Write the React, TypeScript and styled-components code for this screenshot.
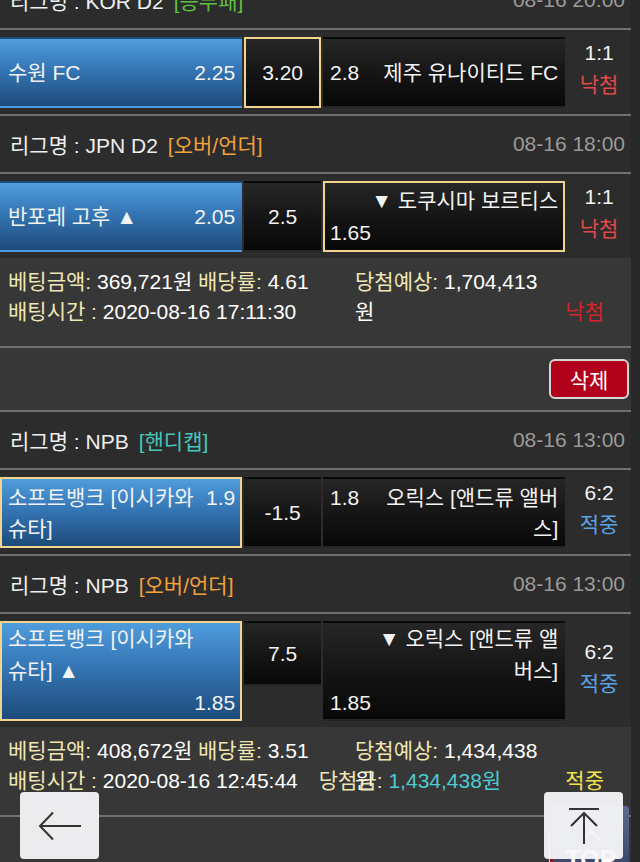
import React from "react";
import styled, { createGlobalStyle } from "styled-components";

type Tone = "green" | "orange" | "teal";
type Result = "낙첨" | "적중";

interface Side {
  name: string
  odds: string
  selected?: boolean
  stacked?: boolean
}

interface Game {
  league: string
  kind: string
  tone: Tone
  time: string
  home: Side
  line: string
  lineSelected?: boolean
  lineShort?: boolean
  away: Side
  score: string
  result: Result
}

interface Bet {
  games: Game[]
  amount: string
  rate: string
  expected: string
  betTime: string
  win?: string
  status: Result
}

const toneColors: Record<Tone, string> = {
  green: "#5fbf3f",
  orange: "#f0a23a",
  teal: "#45c6bd",
};

const bets: Bet[] = [
  {
    games: [
      {
        league: "KOR D2",
        kind: "승무패",
        tone: "green",
        time: "08-16 20:00",
        home: { name: "수원 FC", odds: "2.25" },
        line: "3.20",
        lineSelected: true,
        away: { name: "제주 유나이티드 FC", odds: "2.8" },
        score: "1:1",
        result: "낙첨",
      },
      {
        league: "JPN D2",
        kind: "오버/언더",
        tone: "orange",
        time: "08-16 18:00",
        home: { name: "반포레 고후 ▲", odds: "2.05" },
        line: "2.5",
        away: { name: "▼ 도쿠시마 보르티스", odds: "1.65", selected: true, stacked: true },
        score: "1:1",
        result: "낙첨",
      },
    ],
    amount: "369,721원",
    rate: "4.61",
    expected: "1,704,413원",
    betTime: "2020-08-16 17:11:30",
    status: "낙첨",
  },
  {
    games: [
      {
        league: "NPB",
        kind: "핸디캡",
        tone: "teal",
        time: "08-16 13:00",
        home: { name: "소프트뱅크 [이시카와 슈타]", odds: "1.9", selected: true },
        line: "-1.5",
        away: { name: "오릭스 [앤드류 앨버스]", odds: "1.8" },
        score: "6:2",
        result: "적중",
      },
      {
        league: "NPB",
        kind: "오버/언더",
        tone: "orange",
        time: "08-16 13:00",
        home: { name: "소프트뱅크 [이시카와 슈타] ▲", odds: "1.85", selected: true, stacked: true },
        line: "7.5",
        lineShort: true,
        away: { name: "▼ 오릭스 [앤드류 앨버스]", odds: "1.85", stacked: true },
        score: "6:2",
        result: "적중",
      },
    ],
    amount: "408,672원",
    rate: "3.51",
    expected: "1,434,438원",
    betTime: "2020-08-16 12:45:44",
    win: "1,434,438원",
    status: "적중",
  },
];

const GlobalStyle = createGlobalStyle`
  html, body {
    margin: 0;
    padding: 0;
    background: #272727;
  }

  body {
    font-family: "Liberation Sans", "Noto Sans CJK KR", sans-serif;
    font-size: 21px;
    color: #f2f2f2;
    overflow: hidden;
  }
`

const Page = styled.div`
  position: relative;
  width: 631px;
  height: 862px;
  overflow: hidden;
  background: #2c2c2c;
`

// the list is scrolled a little, so the first league header is cut at the top
const List = styled.div`
  margin-top: -30px;
`

const LeagueHeader = styled.div`
  display: flex;
  align-items: center;
  justify-content: space-between;
  height: 56px;
  padding: 0 6px 0 10px;
  border-top: 2px solid #6f6f6f;
  border-bottom: 2px solid #6f6f6f;
  background: #2c2c2c;
  white-space: nowrap;
`

const LeagueName = styled.div`
  color: #efefef;
`

const Kind = styled.span<{ $tone: Tone }>`
  margin-left: 10px;
  color: ${(p) => toneColors[p.$tone]};
`

const GameTime = styled.div`
  color: #9a9a9a;
`

const MatchRow = styled.div`
  display: flex;
  align-items: stretch;
  gap: 2px;
  padding: 7px 0 6px;
  background: #2c2c2c;
`

const Cell = styled.div<{ $selected?: boolean }>`
  box-sizing: border-box;
  min-height: 68px;
  border: 2px solid ${(p) => (p.$selected ? "#f2d58c" : "transparent")};
  background: linear-gradient(to bottom, #262626 0%, #141414 55%, #080808 100%);
  line-height: 31px;
`

const TeamCell = styled(Cell)<{ $home?: boolean; $stacked?: boolean }>`
  width: 243px;
  display: flex;
  flex-direction: column;
  justify-content: center;
  padding: ${(p) => (p.$stacked ? "0" : "2px")} 5px ${(p) => (p.$stacked ? "0" : "2px")}
    ${(p) => (p.$home ? "6px" : "5px")};
  line-height: ${(p) => (p.$stacked ? "32px" : "31px")};
  background: ${(p) =>
    p.$home
      ? "linear-gradient(to bottom, #4f9cdd 0%, #3576b5 45%, #1d4b7b 100%)"
      : "linear-gradient(to bottom, #262626 0%, #141414 55%, #080808 100%)"};
`

const TeamLine = styled.div`
  display: flex;
  align-items: flex-start;
  gap: 6px;
`

const TeamName = styled.div<{ $right?: boolean }>`
  flex: 1;
  text-align: ${(p) => (p.$right ? "right" : "left")};
`

const StackedName = styled.div<{ $right?: boolean }>`
  max-width: 190px;
  align-self: ${(p) => (p.$right ? "flex-end" : "flex-start")};
  text-align: ${(p) => (p.$right ? "right" : "left")};
`

const Odds = styled.div<{ $right?: boolean }>`
  flex-shrink: 0;
  text-align: ${(p) => (p.$right ? "right" : "left")};
`

const LineCell = styled(Cell)<{ $short?: boolean }>`
  width: 77px;
  display: flex;
  align-items: center;
  justify-content: center;
  align-self: ${(p) => (p.$short ? "flex-start" : "stretch")};
  height: ${(p) => (p.$short ? "65px" : "auto")};
  min-height: ${(p) => (p.$short ? "65px" : "68px")};
`

const ScoreCell = styled.div`
  width: 64px;
  display: flex;
  flex-direction: column;
  align-items: center;
  justify-content: center;
  line-height: 32px;
  padding-bottom: 7px;
`

const Status = styled.div<{ $result: Result; $summary?: boolean }>`
  color: ${(p) =>
    p.$result === "낙첨"
      ? p.$summary ? "#d8232a" : "#e04a4a"
      : p.$summary ? "#f3e24a" : "#5aa3e4"};
`

const Info = styled.div`
  padding: 9px 8px 19px;
  background: #373737;
  line-height: 30px;
`

const InfoLine = styled.div`
  display: flex;
  align-items: flex-start;
  height: 30px;
  white-space: nowrap;
`

const InfoLeft = styled.div`
  width: 347px;
  flex-shrink: 0;
`

const Expected = styled.div`
  width: 195px;
  white-space: normal;
`

const Label = styled.span`
  color: #f0e6b4;
`

const Value = styled.span<{ $win?: boolean }>`
  color: ${(p) => (p.$win ? "#4ecbd1" : "#ffffff")};
`

const WinBlock = styled.div`
  margin-left: 21px;
`

const SummaryStatus = styled(Status)`
  margin-left: auto;
  margin-right: 19px;
`

const Actions = styled.div`
  display: flex;
  justify-content: flex-end;
  padding: 11px 2px;
  border-top: 2px solid #6f6f6f;
  background: #373737;
`

const DeleteButton = styled.button`
  box-sizing: border-box;
  width: 80px;
  height: 40px;
  padding: 0;
  border: 2px solid #d6d6d6;
  border-radius: 6px;
  background: #b0001a;
  color: #ffffff;
  font: inherit;
`

const FloatButton = styled.div<{ $left: number }>`
  position: absolute;
  left: ${(p) => p.$left}px;
  top: 792px;
  width: 79px;
  height: 67px;
  display: flex;
  align-items: center;
  justify-content: center;
  border-radius: 4px;
  background: rgba(248, 248, 250, 0.94);
  z-index: 2;
`

const SiteTopButton = styled.div`
  position: absolute;
  left: 550px;
  top: 806px;
  width: 79px;
  height: 70px;
  box-sizing: border-box;
  display: flex;
  flex-direction: column;
  align-items: center;
  border-left: 3px solid #8c1426;
  border-radius: 4px 4px 0 0;
  background: linear-gradient(to bottom, #5d6b93, #33405f);
  color: #ffffff;
  font-weight: bold;
  font-size: 25px;
  line-height: 26px;
  z-index: 1;
`

const ChevronWrap = styled.div`
  margin-top: 14px;
`

const TeamBox = ({ side, home }: { side: Side; home?: boolean }) => (
  <TeamCell $home={home} $selected={side.selected} $stacked={side.stacked}>
    {side.stacked ? (
      <>
        <StackedName $right={!home}>{side.name}</StackedName>
        <Odds $right={home}>{side.odds}</Odds>
      </>
    ) : home ? (
      <TeamLine>
        <TeamName>{side.name}</TeamName>
        <Odds>{side.odds}</Odds>
      </TeamLine>
    ) : (
      <TeamLine>
        <Odds>{side.odds}</Odds>
        <TeamName $right>{side.name}</TeamName>
      </TeamLine>
    )}
  </TeamCell>
)

const GameBlock = ({ game }: { game: Game }) => (
  <>
    <LeagueHeader>
      <LeagueName>
        리그명 : {game.league}
        <Kind $tone={game.tone}>[{game.kind}]</Kind>
      </LeagueName>
      <GameTime>{game.time}</GameTime>
    </LeagueHeader>
    <MatchRow>
      <TeamBox side={game.home} home />
      <LineCell $selected={game.lineSelected} $short={game.lineShort}>
        {game.line}
      </LineCell>
      <TeamBox side={game.away} />
      <ScoreCell>
        <div>{game.score}</div>
        <Status $result={game.result}>{game.result}</Status>
      </ScoreCell>
    </MatchRow>
  </>
)

const BetSlip = ({ bet }: { bet: Bet }) => (
  <>
    {bet.games.map((g, i) => (
      <GameBlock key={i} game={g} />
    ))}
    <Info>
      <InfoLine>
        <InfoLeft>
          <Label>베팅금액:</Label> <Value>{bet.amount}</Value> <Label>배당률:</Label>{" "}
          <Value>{bet.rate}</Value>
        </InfoLeft>
        <Expected>
          <Label>당첨예상:</Label> <Value>{bet.expected}</Value>
        </Expected>
      </InfoLine>
      <InfoLine>
        <div>
          <Label>배팅시간 :</Label> <Value>{bet.betTime}</Value>
        </div>
        {bet.win && (
          <WinBlock>
            <Label>당첨금:</Label> <Value $win>{bet.win}</Value>
          </WinBlock>
        )}
        <SummaryStatus $result={bet.status} $summary>
          {bet.status}
        </SummaryStatus>
      </InfoLine>
    </Info>
    <Actions>
      <DeleteButton>삭제</DeleteButton>
    </Actions>
  </>
)

const BackIcon = () => (
  <svg width="44" height="30" viewBox="0 0 44 30" fill="none" stroke="#333" strokeWidth="2">
    <path d="M2 15 H43" />
    <path d="M15 1.5 L2 15 L15 28.5" />
  </svg>
)

const ToTopIcon = () => (
  <svg width="32" height="36" viewBox="0 0 32 36" fill="none" stroke="#333" strokeWidth="2">
    <path d="M1 1 H31" />
    <path d="M16 5 V36" />
    <path d="M3 18 L16 5 L29 18" />
  </svg>
)

const Chevron = () => (
  <svg width="22" height="14" viewBox="0 0 22 14" fill="none" stroke="rgba(255,255,255,0.7)" strokeWidth="3">
    <path d="M2 12 L11 3 L20 12" />
  </svg>
)

export default function App() {
  return (
    <>
      <GlobalStyle />
      <Page>
        <List>
          {bets.map((b, i) => (
            <BetSlip key={i} bet={b} />
          ))}
        </List>
        <FloatButton $left={20}>
          <BackIcon />
        </FloatButton>
        <SiteTopButton>
          <ChevronWrap>
            <Chevron />
          </ChevronWrap>
          <div>TOP</div>
        </SiteTopButton>
        <FloatButton $left={544}>
          <ToTopIcon />
        </FloatButton>
      </Page>
    </>
  )
}
